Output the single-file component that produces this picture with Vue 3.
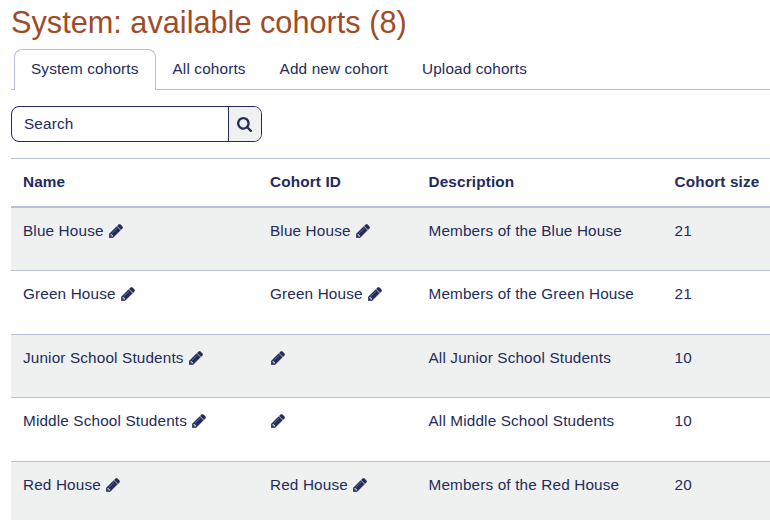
<script setup>
const tabs = ['System cohorts', 'All cohorts', 'Add new cohort', 'Upload cohorts']

const cohorts = [
  { name: 'Blue House', id: 'Blue House', description: 'Members of the Blue House', size: 21 },
  { name: 'Green House', id: 'Green House', description: 'Members of the Green House', size: 21 },
  { name: 'Junior School Students', id: '', description: 'All Junior School Students', size: 10 },
  { name: 'Middle School Students', id: '', description: 'All Middle School Students', size: 10 },
  { name: 'Red House', id: 'Red House', description: 'Members of the Red House', size: 20 },
]

const pencil =
  'M491 1536l91-91-235-235-91 91v107h128v128h107zm523-928q0-22-22-22-10 0-17 7l-542 542q-7 7-7 17 0 22 22 22 10 0 17-7l542-542q7-7 7-17zm-54-192l416 416-832 832h-416v-416zm683 96q0 53-37 90l-166 166-416-416 166-165q36-38 90-38 53 0 91 38l235 234q37 39 37 91z'
</script>

<template>
  <main class="page">
    <h1>System: available cohorts (8)</h1>

    <nav class="tabs">
      <a v-for="(tab, i) in tabs" :key="tab" class="tab" :class="{ active: i === 0 }">{{ tab }}</a>
    </nav>

    <form class="search">
      <span class="field">Search</span>
      <span class="submit">
        <svg viewBox="64 128 1664 1664" class="magnifier">
          <path d="M1216 832q0-185-131.5-316.5t-316.5-131.5-316.5 131.5-131.5 316.5 131.5 316.5 316.5 131.5 316.5-131.5 131.5-316.5zm512 832q0 52-38 90t-90 38q-54 0-90-38l-343-342q-179 124-399 124-143 0-273.5-55.5t-225-150-150-225-55.5-273.5 55.5-273.5 150-225 225-150 273.5-55.5 273.5 55.5 225 150 150 225 55.5 273.5q0 220-124 399l343 343q37 37 37 90z" />
        </svg>
      </span>
    </form>

    <div class="table">
      <div class="row head">
        <span>Name</span>
        <span>Cohort ID</span>
        <span>Description</span>
        <span>Cohort size</span>
      </div>
      <div v-for="c in cohorts" :key="c.name" class="row">
        <span class="editable">{{ c.name }}<svg viewBox="108 129 1555 1555" class="pencil"><path :d="pencil" /></svg></span>
        <span class="editable" :class="{ empty: !c.id }">{{ c.id }}<svg viewBox="108 129 1555 1555" class="pencil"><path :d="pencil" /></svg></span>
        <span>{{ c.description }}</span>
        <span>{{ c.size }}</span>
      </div>
    </div>
  </main>
</template>

<style>
body {
  background: #fff;
  overflow: hidden;
}
</style>

<style scoped>
.page {
  box-sizing: border-box;
  height: 520px;
  padding-left: 11px;
  overflow: hidden;
  color: #232b5c;
  font: 15.3px/22px "Liberation Sans", Arial, sans-serif;
  letter-spacing: 0.15px;
  white-space: nowrap;
}

h1 {
  margin: 0;
  padding-top: 5px;
  height: 44px;
  color: #a04b27;
  font-size: 30.7px;
  font-weight: 400;
  letter-spacing: 0;
  line-height: 36px;
}

.tabs {
  display: flex;
  height: 40px;
  padding-left: 3px;
  border-bottom: 1px solid #b9c1d2;
}

.tab {
  box-sizing: border-box;
  height: 41px;
  padding: 8px 16px 0;
  border: 1px solid transparent;
  border-bottom: 0;
}

.tab.active {
  background: #fff;
  border-color: #b9c1d2;
  border-radius: 8px 8px 0 0;
}

.search {
  box-sizing: border-box;
  display: flex;
  width: 251px;
  height: 36px;
  margin: 16px 0;
  border: 1px solid #232b5c;
  border-radius: 8px;
  overflow: hidden;
}

.field {
  flex: 1;
  padding: 6px 12px;
}

.submit {
  box-sizing: border-box;
  display: flex;
  align-items: center;
  justify-content: center;
  width: 33px;
  padding-right: 1px;
  background: #eff1f0;
  border-left: 1px solid #232b5c;
}

svg {
  display: block;
  fill: #232b5c;
}

.magnifier {
  width: 15px;
  height: 15px;
}

.row {
  box-sizing: border-box;
  display: grid;
  grid-template-columns: 247px 158.5px 246px 1fr;
  height: 63.5px;
  padding: 12px 0 0 12px;
  border-top: 1px solid #b9c1d2;
}

.row:nth-child(even) {
  background: #eff1f0;
}

.row.head {
  height: 48px;
  font-weight: 700;
}

.head + .row {
  border-top-width: 2px;
  height: 64px;
}

.editable {
  display: flex;
  align-items: flex-start;
}

.pencil {
  width: 14px;
  height: 14px;
  margin: 4px 0 0 5px;
  stroke: #232b5c;
  stroke-width: 40;
}

.empty .pencil {
  margin-left: 1px;
}
</style>
